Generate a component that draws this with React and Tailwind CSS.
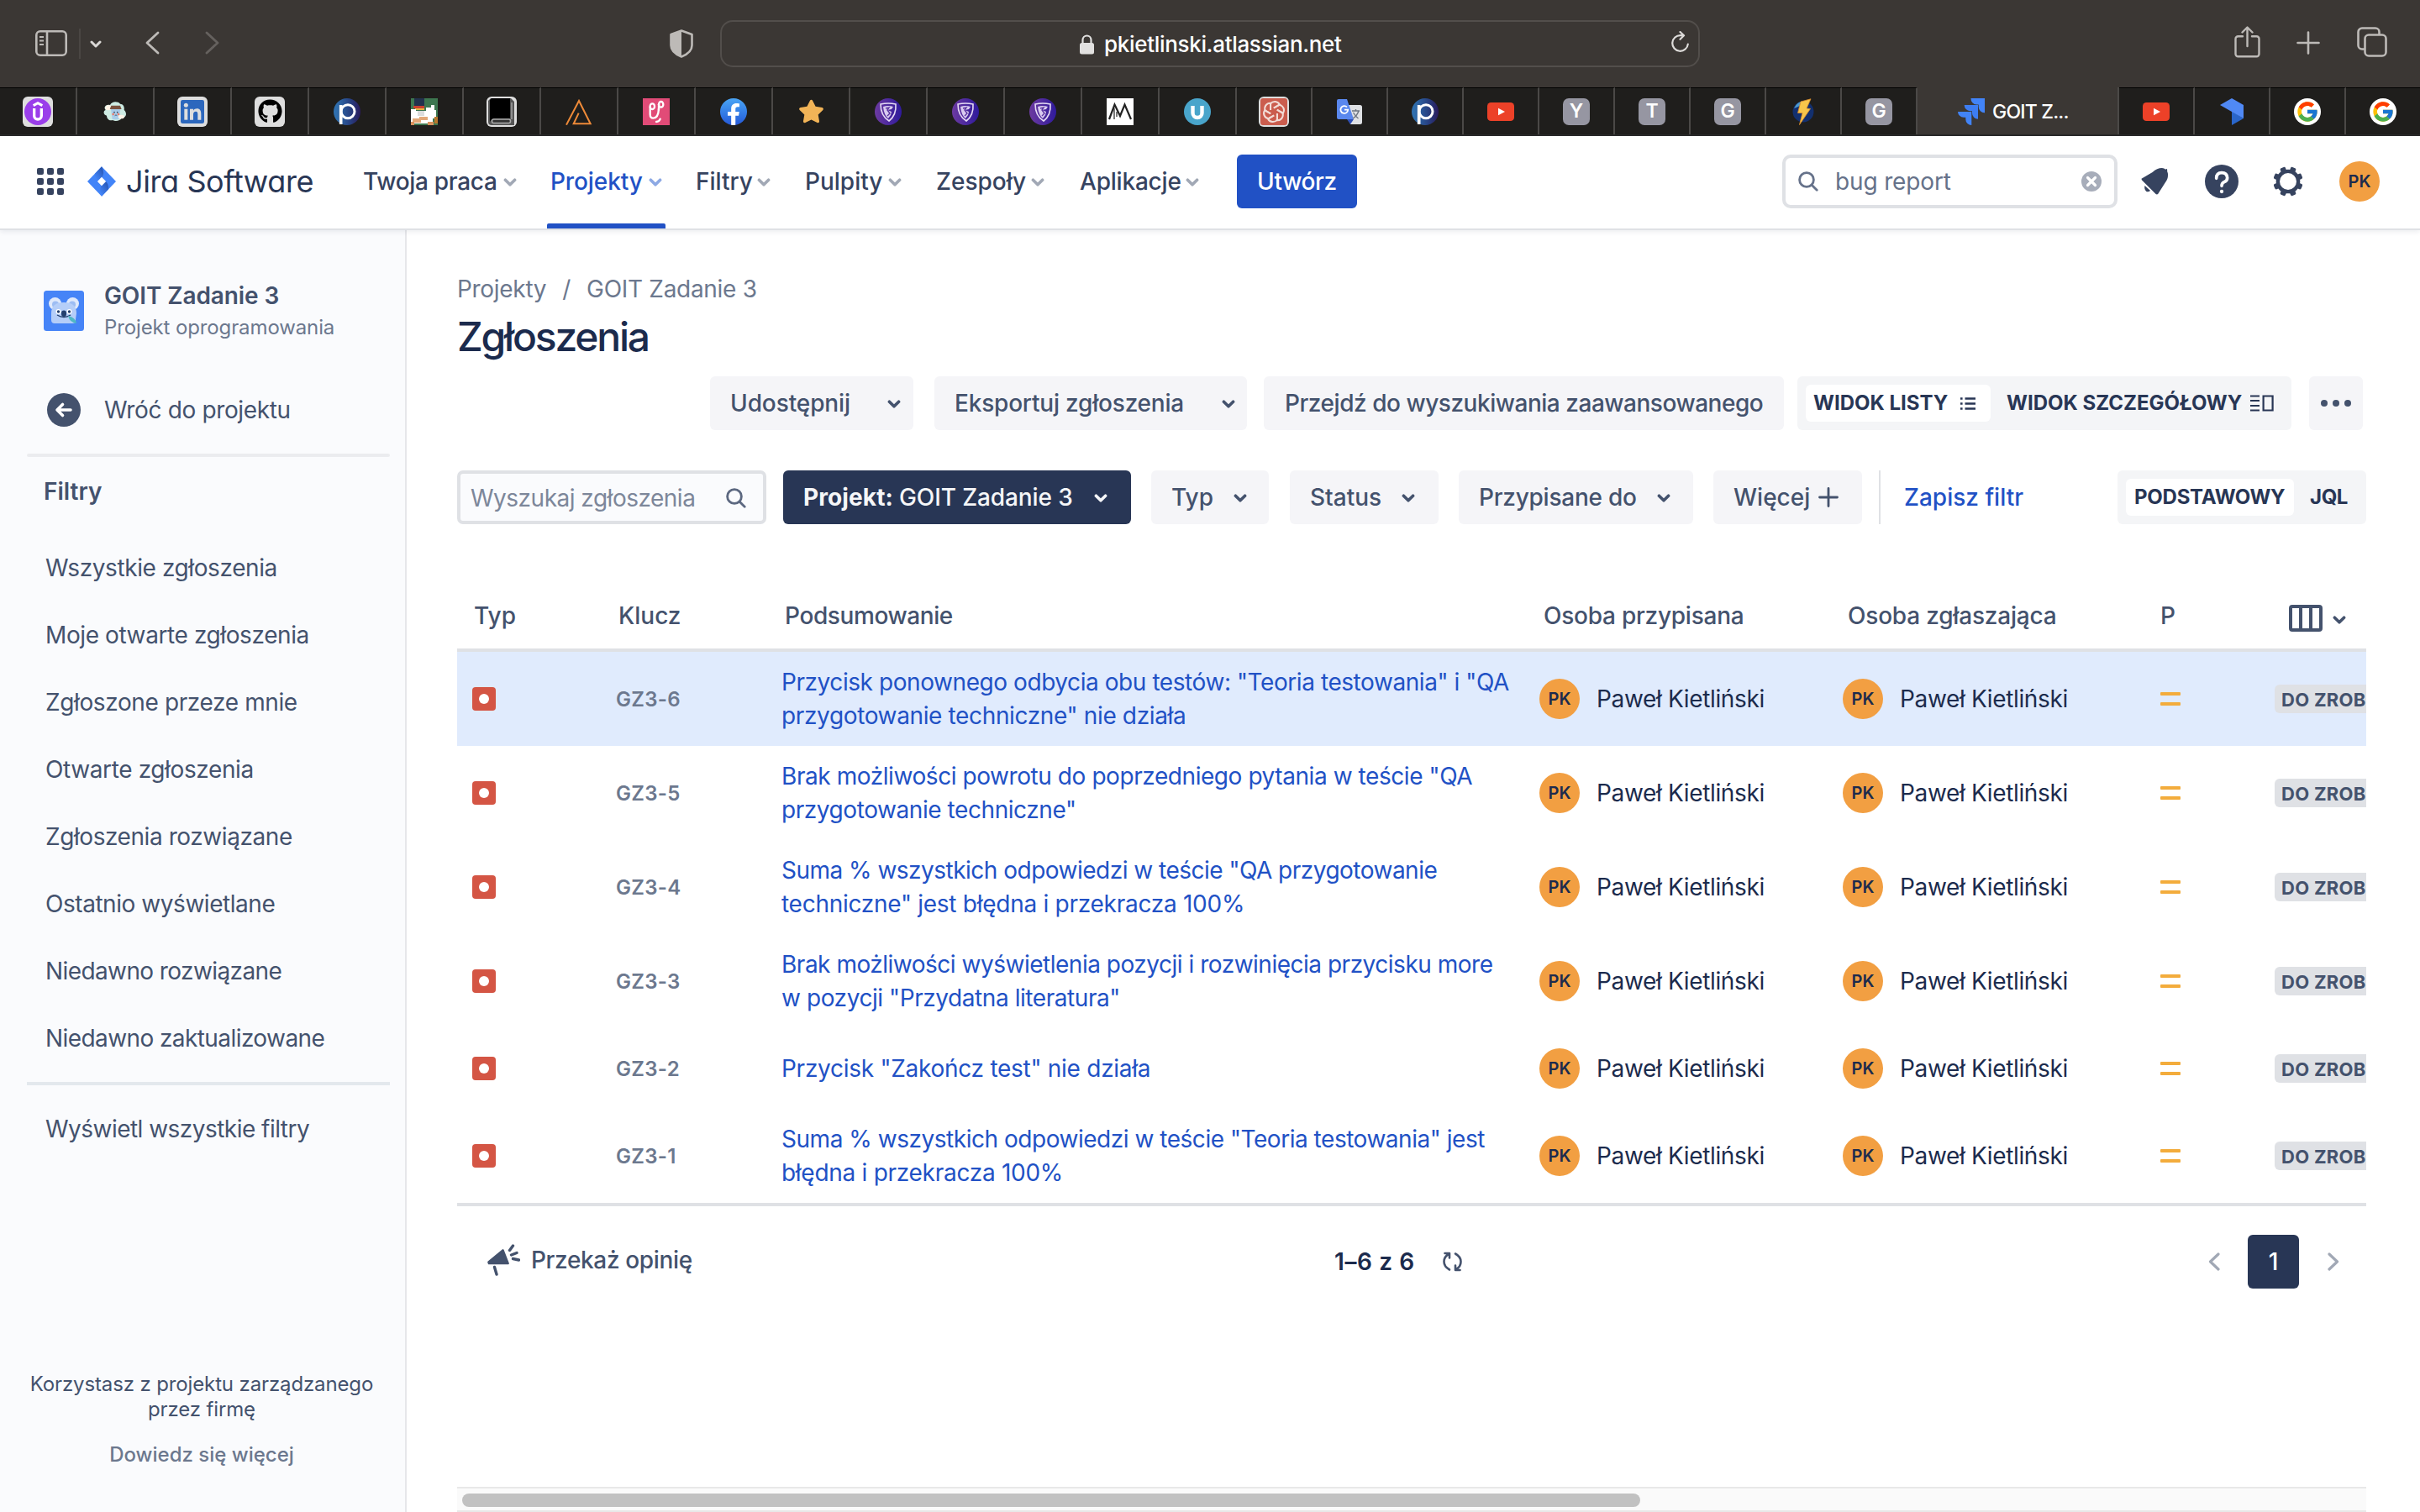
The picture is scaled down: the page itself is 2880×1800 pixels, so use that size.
import React from "react";
import { FaGithub, FaStar, FaFacebookF } from "react-icons/fa";
import { FcGoogle } from "react-icons/fc";

function Chevron({ className }) {
  return (
    <svg className={className} width="16" height="10" viewBox="0 0 16 10" fill="none" stroke="currentColor" strokeWidth="3.6" strokeLinecap="round" strokeLinejoin="round">
      <path d="M2.4 2.2 8 7.8l5.6-5.6" />
    </svg>
  );
}

function Search({ className }) {
  return (
    <svg className={className} width="24" height="24" viewBox="0 0 24 24" fill="none" stroke="currentColor" strokeWidth="2.8" strokeLinecap="round">
      <circle cx="10" cy="10" r="8.4" />
      <path d="m16.2 16.2 6 6" />
    </svg>
  );
}

/* ---------- Favicons ---------- */

function Tile({ children }) {
  return <span className="flex h-9 w-9 items-center justify-center rounded-md bg-[#dedede]">{children}</span>;
}

function Udemy() {
  return (
    <Tile>
      <svg width="32" height="32" viewBox="0 0 96 96">
        <circle cx="48" cy="48" r="48" fill="#9a3eea" />
        <path d="M32 26 48 17l16 9" fill="none" stroke="#fff" strokeWidth="9" />
        <path d="M35 36v26a13 13 0 0 0 26 0V36" fill="none" stroke="#fff" strokeWidth="10" />
      </svg>
    </Tile>
  );
}

function CoffeeCup() {
  return (
    <svg width="28" height="24" viewBox="0 0 84 72">
      <path d="M24 12C30-2 52-2 60 8c12 0 16 12 14 22 12 10 8 28-8 28-6 12-24 14-32 8C20 70 12 60 12 50-2 46 0 32 8 30-2 18 12 8 24 12z" fill="#cdebe2" />
      <ellipse cx="18" cy="22" rx="11" ry="9" fill="#fff4e6" />
      <path d="M27 26h34l-5 38H32z" fill="#a9cdea" />
      <path d="M28 14h32l5 13H23z" fill="#7a5340" />
      <circle cx="39" cy="38" r="2.500" fill="#3b4358" />
      <circle cx="50" cy="38" r="2.500" fill="#3b4358" />
      <circle cx="35" cy="45" r="4" fill="#ef7f6b" />
      <circle cx="54" cy="45" r="4" fill="#ef7f6b" />
      <path d="M41 50q4-5 8 0" stroke="#3b4358" strokeWidth="2.500" fill="none" />
      <ellipse cx="64" cy="54" rx="11" ry="7" fill="#fff4e6" />
    </svg>
  );
}

function LinkedIn() {
  return (
    <Tile>
      <svg width="28" height="28" viewBox="0 0 84 84">
        <rect width="84" height="84" rx="7" fill="#2c67bd" />
        <g fill="#dedede">
          <circle cx="19" cy="19" r="7.5" />
          <rect x="13" y="32" width="12" height="39" />
          <path d="M33 32h12v6c3-5 8-7 13-7 11 0 15 8 15 19v21H61V52c0-6-1-11-7-11s-9 4-9 10v20H33z" />
        </g>
      </svg>
    </Tile>
  );
}

function GitHub() {
  return (
    <Tile>
      <FaGithub className="h-[29px] w-[29px] text-black" />
    </Tile>
  );
}

function PIcon({ id }) {
  return (
    <svg width="32" height="32" viewBox="0 0 96 96">
      <defs>
        <linearGradient id={id}>
          <stop offset="0.1" stopColor="#2f6fae" />
          <stop offset="0.6" stopColor="#274283" />
          <stop offset="1" stopColor="#2a1a5c" />
        </linearGradient>
      </defs>
      <circle cx="48" cy="48" r="48" fill={`url(#${id})`} />
      <path d="M26 93V24" stroke="#fff" strokeWidth="11" fill="none" />
      <circle cx="51" cy="47" r="24" stroke="#fff" strokeWidth="9" fill="none" />
    </svg>
  );
}

function PixelKnight() {
  return (
    <svg width="32" height="32" viewBox="0 0 32 32" shapeRendering="crispEdges">
      <rect width="32" height="32" fill="#3d7750" />
      <path d="M4 0h12v9H4z" fill="#22324e" />
      <path d="M3 9h13v3H3z" fill="#c9402f" />
      <path d="M5 12h11v2H5z" fill="#e0b545" />
      <path d="M0 13h6v2h12v-4h6V8h4v6h2v10h-4v6H0z" fill="#fff" />
      <path d="M8 15h8v6H8z" fill="#dcdcdc" />
      <path d="M2 24h8v-2h10v4h-8v3H2z" fill="#e3a878" />
      <path d="M0 28h4v4H0zM20 28h7v4h-7z" fill="#d9925e" />
      <path d="M28 22h4v8h-4z" fill="#b7762b" />
    </svg>
  );
}

function Book() {
  return (
    <Tile>
      <svg width="32" height="32" viewBox="0 0 32 32">
        <path d="M3 0h24l4 4v28H4a4 4 0 0 1-4-4V3z" fill="#555" />
        <path d="M4 0h22v24H8c-3 0-5 2-6 4V2z" fill="#000" />
        <path d="M28 5v20" stroke="#8d8d8d" strokeWidth="2" />
        <rect x="4.500" y="25" width="22" height="4.500" rx="2" fill="#333" stroke="#aaa" strokeWidth="1.600" />
      </svg>
    </Tile>
  );
}

function OrangeTriangle() {
  return (
    <svg width="32" height="32" viewBox="0 0 96 96" fill="none" stroke="#ee8a38" strokeWidth="6">
      <path d="M3 95 48 9l41 82H29l18-38" />
    </svg>
  );
}

function PinkScript() {
  return (
    <svg width="32" height="32" viewBox="0 0 96 96">
      <rect width="96" height="96" fill="#e14b77" />
      <g fill="none" stroke="#fff" strokeWidth="7" strokeLinecap="round" strokeLinejoin="round">
        <ellipse cx="34" cy="29" rx="8" ry="10" />
        <path d="M26 31v26c0 9 4 14 11 14 14 0 19-14 20-34" />
        <ellipse cx="65" cy="22" rx="8" ry="10" />
        <path d="M57 22v20" />
        <path d="M48 84c8 0 12-4 14-10" />
      </g>
    </svg>
  );
}

function Facebook() {
  return (
    <span className="flex h-8 w-8 items-end justify-center overflow-hidden rounded-full bg-linear-to-b from-[#4ba5f5] to-[#2658d8]">
      <FaFacebookF className="h-[26px] w-[26px] text-white" />
    </span>
  );
}

function Shield({ id }) {
  return (
    <svg width="32" height="32" viewBox="0 0 32 32">
      <defs>
        <linearGradient id={id}>
          <stop offset="0" stopColor="#6c3aa0" />
          <stop offset="1" stopColor="#2f1a9c" />
        </linearGradient>
      </defs>
      <circle cx="16" cy="16" r="16" fill={`url(#${id})`} />
      <path d="M7 7q9-2 18 0 1 13-8 20Q7 21 7 7z" fill="none" stroke="#e6dcf5" strokeWidth="1.600" />
      <path d="M10 10q6-2 12 0l-2 3-5 1 5 2-1 4-3 4q-5-4-6-14z" fill="#d9cbf0" />
      <path d="M13 12l4-1-2 3 3 4-3 3" fill="none" stroke="#5a34a0" strokeWidth="1.400" />
    </svg>
  );
}

function Peaks() {
  return (
    <svg width="32" height="32" viewBox="0 0 32 32">
      <rect width="32" height="32" fill="#fff" />
      <path d="M3 25 9.500 7.500 16 21 21.500 7.500 29 25" fill="none" stroke="#222" strokeWidth="2.200" />
      <path d="M9 12v13M12 16v6" stroke="#222" strokeWidth="1.200" />
    </svg>
  );
}

function BlueU() {
  return (
    <svg width="32" height="32" viewBox="0 0 32 32">
      <circle cx="16" cy="16" r="16" fill="#49a5cb" />
      <path d="M10.500 9v8.500a5.500 5.500 0 0 0 11 0V9" fill="none" stroke="#fff" strokeWidth="4.400" />
    </svg>
  );
}

function Knot() {
  return (
    <Tile>
      <svg width="32" height="32" viewBox="-16 -16 32 32">
        <rect x="-16" y="-16" width="32" height="32" rx="3" fill="#cb5d4e" />
        <g fill="none" stroke="#f2dcd6" strokeWidth="2">
          {[0, 60, 120, 180, 240, 300].map((a) => (
            <path key={a} transform={`rotate(${a})`} d="M0-4.500 7-8.500A6.500 6.500 0 0 0-4-9.500V-2" />
          ))}
        </g>
      </svg>
    </Tile>
  );
}

function Translate() {
  return (
    <svg width="32" height="32" viewBox="0 0 32 32">
      <path d="M12 8h16.500a2.500 2.500 0 0 1 2.500 2.500v18a2.500 2.500 0 0 1-2.500 2.500H17z" fill="#dfe1e4" />
      <path d="M17 31 13 25h8z" fill="#2f4fb5" />
      <path d="M3 1h10l8 24H3a2 2 0 0 1-2-2V3a2 2 0 0 1 2-2z" fill="#5a88ee" />
      <path d="M13 10.500a4.400 4.400 0 1 0 1.200 3.200H10" fill="none" stroke="#fff" strokeWidth="1.800" />
      <path d="M19 15h9M23.500 13v2M27 15q-2 6-7 9M20.500 17q3 5 6 7" fill="none" stroke="#6d7580" strokeWidth="1.400" />
    </svg>
  );
}

function YouTube() {
  return (
    <svg width="32" height="22" viewBox="0 0 96 66">
      <rect width="96" height="66" rx="13" fill="#ec4128" />
      <path d="M39 20v26l24-13z" fill="#fff" />
    </svg>
  );
}

function Letter({ children }) {
  return <span className="flex h-8 w-8 items-center justify-center rounded-[7px] bg-[#9696a2] text-[23px] font-semibold leading-none text-white">{children}</span>;
}

function Bolt() {
  return (
    <svg width="28" height="32" viewBox="0 0 28 32">
      <circle cx="14" cy="16" r="12.500" fill="#13306f" />
      <path d="M3 12A13 13 0 0 1 16 3.200q-4 6-13 8.800z" fill="#4b9ad0" />
      <path d="M23 .800 11 4 7.500 17.500h5.500L9.500 31.500 22.500 12.500l-4.500-.5z" fill="#f8c64b" stroke="#d98a2b" strokeWidth="0.800" />
    </svg>
  );
}

function JiraTab() {
  return (
    <svg width="32" height="32" viewBox="0 0 32 32">
      <path d="M15.500 0H32v17.200a7 7 0 0 1-7.300-7V7.600h-2.300A7.200 7.200 0 0 1 15.500 0z" fill="#4284f8" />
      <path d="M7.700 8H24v16.800a7 7 0 0 1-7-7v-2.500h-2.300a7.200 7.200 0 0 1-7-7.300z" fill="#3d7df2" />
      <path d="M0 16h16.300v16a7 7 0 0 1-7-7v-2.200H7A7 7 0 0 1 0 16z" fill="#4284f8" />
    </svg>
  );
}

function Ribbon() {
  return (
    <svg width="28" height="32" viewBox="0 0 84 96">
      <path d="M42 46v50l42-24z" fill="#2a66ca" />
      <path d="M0 24 42 0l42 24v48z" fill="#5089f5" />
    </svg>
  );
}

function Google() {
  return (
    <span className="flex h-8 w-8 items-center justify-center rounded-full bg-white">
      <FcGoogle className="h-[28px] w-[28px]" />
    </span>
  );
}

const wideTabs = [
  <Udemy />, <CoffeeCup />, <LinkedIn />, <GitHub />, <PIcon id="pa" />, <PixelKnight />, <Book />, <OrangeTriangle />,
  <PinkScript />, <Facebook />, <FaStar className="h-[31px] w-[31px] text-[#f2b457]" />, <Shield id="sa" />, <Shield id="sb" />, <Shield id="sc" />, <Peaks />, <BlueU />,
];
const midTabs = [<Knot />, <Translate />, <PIcon id="pb" />, <YouTube />, <Letter>Y</Letter>, <Letter>T</Letter>, <Letter>G</Letter>, <Bolt />, <Letter>G</Letter>];
const endTabs = [<YouTube />, <Ribbon />, <Google />, <Google />];

function Tab({ width, children }) {
  return <div className={`flex shrink-0 items-center justify-center border-t border-r-2 border-t-black border-r-[#4b4947] bg-[#1f1e1c] ${width}`}>{children}</div>;
}

/* ---------- Browser chrome ---------- */

function BrowserToolbar() {
  return (
    <div className="flex h-[104px] shrink-0 items-center bg-[#3b3734] text-[#bdbab7]">
      <svg className="ml-[42px] -mt-0.5" width="38" height="31" viewBox="0 0 38 31" fill="none" stroke="currentColor" strokeWidth="2.600">
        <rect x="1.300" y="1.300" width="35.400" height="28.400" rx="4.500" />
        <path d="M14 1.500v28" />
        <path d="M5 8h5M5 12.500h5M5 17h5" strokeWidth="2" />
      </svg>
      <div className="ml-[14px] h-9 w-[2px] bg-[#4a4643]" />
      <svg className="ml-[11px]" width="14" height="9" viewBox="0 0 14 9" fill="none" stroke="#d9d7d5" strokeWidth="3" strokeLinecap="round" strokeLinejoin="round">
        <path d="m2 2 5 5 5-5" />
      </svg>
      <svg className="ml-[52px] -mt-0.5" width="17" height="28" viewBox="0 0 17 28" fill="none" stroke="currentColor" strokeWidth="2.800" strokeLinecap="round" strokeLinejoin="round">
        <path d="M15 2 2 14l13 12" />
      </svg>
      <svg className="ml-[54px] -mt-0.5 text-[#65615e]" width="17" height="28" viewBox="0 0 17 28" fill="none" stroke="currentColor" strokeWidth="2.800" strokeLinecap="round" strokeLinejoin="round">
        <path d="m2 2 13 12L2 26" />
      </svg>
      <svg className="ml-[536px]" width="28" height="34" viewBox="0 0 28 34">
        <path d="M14 1.500 26.500 6v13c0 7-5 10.500-12.500 13.500C6.500 29.500 1.500 26 1.500 19V6z" fill="none" stroke="currentColor" strokeWidth="2.600" strokeLinejoin="round" />
        <path d="M14 1.500V32.500C6.500 29.500 1.500 26 1.500 19V6z" fill="currentColor" />
      </svg>
      <div className="ml-[32px] flex h-14 w-[1166px] items-center rounded-[15px] border-2 border-[#524e4b] text-white">
        <svg className="ml-[426px] mt-px" width="17" height="24" viewBox="0 0 17 24" fill="none">
          <rect y="10" width="17" height="13.500" rx="2.500" fill="#e2e1e0" />
          <path d="M3.500 11V6.500a5 5 0 0 1 10 0V11" stroke="#e2e1e0" strokeWidth="2.200" />
        </svg>
        <span className="mt-0.5 ml-[12px] text-[26px] leading-none tracking-[-0.32px] [font-weight:450]">pkietlinski.atlassian.net</span>
        <svg className="ml-auto mr-[10px] -mt-1" width="22" height="26" viewBox="0 0 22 26" fill="none" stroke="#dddbd9" strokeWidth="2.200" strokeLinecap="round" strokeLinejoin="round">
          <path d="M19.800 15.500A9.300 9.300 0 1 1 11 5.200h3.500M10.500 1l4.500 4.300-4.500 4.500" />
        </svg>
      </div>
      <svg className="ml-[636px] -mt-1" width="31" height="38" viewBox="0 0 31 38" fill="none" stroke="currentColor" strokeWidth="2.400" strokeLinecap="round" strokeLinejoin="round">
        <path d="M10 12.200H4.500a3 3 0 0 0-3 3v18a3 3 0 0 0 3 3h22a3 3 0 0 0 3-3v-18a3 3 0 0 0-3-3H21" />
        <path d="M15.500 24V2M9.500 7.500l6-6 6 6" />
      </svg>
      <svg className="ml-[43px] -mt-0.5" width="28" height="28" viewBox="0 0 28 28" stroke="currentColor" strokeWidth="2.600" strokeLinecap="round">
        <path d="M14 1.500v25M1.500 14h25" />
      </svg>
      <svg className="ml-[44px] -mt-1" width="36" height="36" viewBox="0 0 36 36" fill="none" stroke="currentColor" strokeWidth="2.600">
        <rect x="9.500" y="9.500" width="25" height="25" rx="4.500" />
        <path d="M9.500 26.500H6A4.500 4.500 0 0 1 1.500 22V6A4.500 4.500 0 0 1 6 1.500h16A4.500 4.500 0 0 1 26.500 6v3" />
      </svg>
    </div>
  );
}

function TabStrip() {
  return (
    <div className="flex h-[58px] shrink-0 overflow-hidden border-b-2 border-b-[#2a2a2a] bg-[#3b3734]">
      {wideTabs.map((icon, i) => <Tab key={i} width="w-[92px]">{icon}</Tab>)}
      {midTabs.map((icon, i) => <Tab key={i} width="w-[90px]">{icon}</Tab>)}
      <div className="flex w-[240px] shrink-0 items-center border-r-2 border-r-[#4b4947] pt-px pl-[48px]">
        <JiraTab />
        <span className="mt-px ml-[9px] text-[23px] font-medium leading-none tracking-[-0.8px] text-white">GOIT Z...</span>
      </div>
      {endTabs.map((icon, i) => <Tab key={i} width="w-[90px]">{icon}</Tab>)}
    </div>
  );
}

/* ---------- Jira header ---------- */

const navItems = [
  { label: "Twoja praca", box: "w-[222px]", text: "w-[167px] tracking-[-0.3px]" },
  { label: "Projekty", box: "w-[172px]", text: "w-[118px] pl-px tracking-[-0.1px]", active: true },
  { label: "Filtry", box: "w-[130px]", text: "w-[75px] pl-[2px]" },
  { label: "Pulpity", box: "w-[156px]", text: "w-[101px] pl-[2px]" },
  { label: "Zespoły", box: "w-[171px]", text: "w-[115px] pl-[2px]" },
  { label: "Aplikacje", box: "w-[188px]", text: "w-[128px] pl-[2px] tracking-[-0.2px]" },
];

function Avatar({ className }) {
  return <span className={`flex h-12 w-12 shrink-0 items-center justify-center rounded-full bg-[#f29f42] text-[20px] font-semibold leading-none text-[#1c2b4d] ${className || ""}`}>PK</span>;
}

function Header() {
  return (
    <header className="relative z-10 flex h-[112px] shrink-0 items-stretch border-b-2 border-[#dfe1e5] bg-white pb-0.5 text-[28px] font-medium leading-none text-[#36435f] shadow-[0_2px_6px_rgba(9,30,66,0.08)]">
      <div className="ml-[44px] grid grid-cols-3 gap-1 self-center">
        {Array.from({ length: 9 }, (_, i) => <span key={i} className="h-2 w-2 rounded-[2px] bg-[#36435f]" />)}
      </div>
      <svg className="ml-[28px] self-center" width="34" height="36" viewBox="0 0 103 108">
        <defs>
          <linearGradient id="jl" x1="0.800" y1="0.100" x2="0.200" y2="0.900">
            <stop offset="0" stopColor="#2858b8" />
            <stop offset="1" stopColor="#4284f8" />
          </linearGradient>
        </defs>
        <path d="M51.500 0 103 54 51.500 108 0 54z" fill="#4284f8" />
        <path d="M51.500 0 28 25q-2 24 10 28l14-14q12-14-.5-39z" fill="url(#jl)" />
        <path d="M51.500 108 76 82q0-24-12-28L51.500 68q-12 18 0 40z" fill="url(#jl)" />
        <path d="M51.500 38 67 54 51.500 70 36 54z" fill="#fff" />
      </svg>
      <span className="ml-[12px] w-[282px] self-center whitespace-nowrap text-[36px] font-normal tracking-[-0.4px] text-[#283655] [font-feature-settings:'cv11']">Jira Software</span>
      <nav className="flex">
        {navItems.map((n) => (
          <div key={n.label} className={`relative flex items-center whitespace-nowrap ${n.box} ${n.active ? "text-[#2151c5]" : ""}`}>
            <span className={n.text}>{n.label}</span>
            <Chevron className={n.active ? "mt-0.5 text-[#8da9e4]" : "mt-0.5 text-[#a1a8b5]"} />
            {n.active && <span className="absolute -bottom-[2px] -left-[3px] h-[6px] w-[141px] rounded-t-[2px] bg-[#2151c5]" />}
          </div>
        ))}
      </nav>
      <button className="ml-px h-16 w-[143px] self-center rounded-[6px] bg-[#2151c5] tracking-[-0.35px] text-white">Utwórz</button>
      <div className="ml-auto flex h-16 w-[399px] items-center self-center rounded-[10px] border-4 border-[#dfe1e5] font-normal text-[#66728a]">
        <Search className="ml-[15px]" />
        <span className="ml-[20px] tracking-[-0.15px]">bug report</span>
        <svg className="ml-auto mr-[15px]" width="24" height="24" viewBox="0 0 24 24">
          <circle cx="12" cy="12" r="12" fill="#a7adba" />
          <path d="m7.500 7.500 9 9m0-9-9 9" stroke="#fff" strokeWidth="3.200" strokeLinecap="round" />
        </svg>
      </div>
      <svg className="ml-[28px] self-center" width="33" height="32" viewBox="593 300 99 97" fill="#36435f">
        <path d="M594 339 634 315Q650 300 668 300 676 300 681 305 686 301 687 306 686 312 689 318 692 338 680 352L654 393Q650 398 645 393L595 343Z" />
        <path d="M606 364 626 382Q618 388 611 384 603 376 606 364Z" />
      </svg>
      <svg className="ml-[43px] self-center" width="40" height="40" viewBox="0 0 120 120">
        <circle cx="60" cy="60" r="60" fill="#36435f" />
        <path d="M41 49q0-20 19-20t20 18q0 10-11 15-9 4-9 14" fill="none" stroke="#fff" strokeWidth="11" strokeLinecap="round" />
        <circle cx="60" cy="96" r="6.500" fill="#fff" />
      </svg>
      <svg className="ml-[41px] self-center" width="36" height="36" viewBox="-54 -54 108 108">
        <g fill="#36435f">
          <circle r="43" />
          {[22.5, 67.5, 112.5, 157.5].map((a) => <rect key={a} x="-10" y="-53" width="20" height="106" rx="5" transform={`rotate(${a})`} />)}
        </g>
        <circle r="30" fill="#fff" />
      </svg>
      <Avatar className="mr-[48px] ml-[43px] self-center" />
    </header>
  );
}

/* ---------- Sidebar ---------- */

const filters = [
  { label: "Wszystkie zgłoszenia", track: "tracking-[-0.4px]" },
  { label: "Moje otwarte zgłoszenia", track: "tracking-[-0.4px]" },
  { label: "Zgłoszone przeze mnie", track: "tracking-[-0.38px]" },
  { label: "Otwarte zgłoszenia", track: "tracking-[-0.38px]" },
  { label: "Zgłoszenia rozwiązane", track: "tracking-[-0.43px]" },
  { label: "Ostatnio wyświetlane", track: "tracking-[-0.45px]" },
  { label: "Niedawno rozwiązane", track: "tracking-[-0.6px]" },
  { label: "Niedawno zaktualizowane", track: "tracking-[-0.58px]" },
];

function Koala() {
  return (
    <svg width="48" height="48" viewBox="0 0 48 48">
      <rect width="48" height="48" rx="3.500" fill="#4684f7" />
      <g fill="#dfe9fb">
        <circle cx="13.500" cy="15.500" r="7.500" />
        <circle cx="34.500" cy="15.500" r="7.500" />
      </g>
      <g fill="#9dbdf3">
        <circle cx="14" cy="16.500" r="4" />
        <circle cx="34" cy="16.500" r="4" />
      </g>
      <path d="M9 27q0-13 15-13t15 13l-1 7v2q0 3-4 3H13q-4 0-4-4z" fill="#b5cef8" />
      <circle cx="17.500" cy="25" r="3" fill="#fff" />
      <circle cx="30.500" cy="25" r="3" fill="#fff" />
      <circle cx="17.500" cy="25" r="1.700" fill="#24406f" />
      <circle cx="30.500" cy="25" r="1.700" fill="#24406f" />
      <rect x="21" y="23.500" width="6" height="7.500" rx="3" fill="#24406f" />
      <path d="M16 29q8 5 16 0" fill="none" stroke="#24406f" strokeWidth="1.300" />
      <path d="M29 30q9 2 10 9-8-1-10-9z" fill="#4fb9c4" />
    </svg>
  );
}

function Sidebar() {
  return (
    <aside className="flex w-[484px] shrink-0 flex-col border-r-2 border-[#e6e7ea] bg-[#fafbfd] text-[28px] leading-none whitespace-nowrap text-[#44526d]">
      <div className="mt-[72px] ml-[52px] flex h-12 items-center">
        <Koala />
        <div className="mt-0.5 ml-[24px] flex flex-col gap-2">
          <span className="h-[30px] font-semibold leading-[30px] tracking-[-0.1px]">GOIT Zadanie 3</span>
          <span className="h-[30px] text-[24px] leading-[30px] tracking-[-0.12px] text-[#6c788e]">Projekt oprogramowania</span>
        </div>
      </div>
      <div className="mt-[74px] ml-[56px] flex h-10 items-center">
        <svg width="40" height="40" viewBox="0 0 40 40">
          <circle cx="20" cy="20" r="20" fill="#44526d" />
          <path d="M28 20H12.500M18.500 13.500 12 20l6.500 6.500" fill="none" stroke="#fff" strokeWidth="3.600" strokeLinecap="round" strokeLinejoin="round" />
        </svg>
        <span className="ml-[28px] tracking-[-0.35px]">Wróć do projektu</span>
      </div>
      <div className="mt-[32px] ml-[32px] h-1 w-[432px] rounded-sm bg-[#ebecef]" />
      <div className="mt-[21px] ml-[52px] h-10 leading-10 font-semibold">Filtry</div>
      <ul className="mt-[31px] ml-[54px]">
        {filters.map((f) => <li key={f.label} className={`h-20 leading-[81px] ${f.track}`}>{f.label}</li>)}
      </ul>
      <div className="mt-[12px] ml-[32px] h-1 w-[432px] bg-[#e3e8ed]" />
      <div className="mt-[32px] ml-[54px] h-10 leading-[41px] tracking-[-0.53px]">Wyświetl wszystkie filtry</div>
      <div className="mt-auto mb-[53px] w-[480px] text-center text-[24px] leading-[30px]">
        <p className="tracking-[-0.13px]">Korzystasz z projektu zarządzanego<br />przez firmę</p>
        <p className="mt-[24px] font-medium text-[#6c788e]">Dowiedz się więcej</p>
      </div>
    </aside>
  );
}

/* ---------- Issues ---------- */

const btn = "flex h-16 shrink-0 items-center rounded-[6px] bg-[#f5f5f8]";
const cols = "grid grid-cols-[189px_196px_903px_361px_378px_136px_109px] items-center";

const issues = [
  {
    key: "GZ3-6",
    selected: true,
    lines: [
      { text: 'Przycisk ponownego odbycia obu testów: "Teoria testowania" i "QA', track: "tracking-[-0.43px]" },
      { text: 'przygotowanie techniczne" nie działa', track: "tracking-[-0.36px]" },
    ],
  },
  {
    key: "GZ3-5",
    lines: [
      { text: 'Brak możliwości powrotu do poprzedniego pytania w teście "QA', track: "tracking-[-0.43px]" },
      { text: 'przygotowanie techniczne"', track: "tracking-[-0.43px]" },
    ],
  },
  {
    key: "GZ3-4",
    lines: [
      { text: 'Suma % wszystkich odpowiedzi w teście "QA przygotowanie', track: "tracking-[-0.51px]" },
      { text: 'techniczne" jest błędna i przekracza 100%', track: "tracking-[-0.27px]" },
    ],
  },
  {
    key: "GZ3-3",
    lines: [
      { text: "Brak możliwości wyświetlenia pozycji i rozwinięcia przycisku more", track: "tracking-[-0.49px]" },
      { text: 'w pozycji "Przydatna literatura"', track: "tracking-[-0.43px]" },
    ],
  },
  { key: "GZ3-2", lines: [{ text: 'Przycisk "Zakończ test" nie działa', track: "tracking-[-0.27px]" }] },
  {
    key: "GZ3-1",
    lines: [
      { text: 'Suma % wszystkich odpowiedzi w teście "Teoria testowania" jest', track: "tracking-[-0.47px]" },
      { text: "błędna i przekracza 100%", track: "tracking-[-0.28px]" },
    ],
  },
];

function Person() {
  return (
    <div className="flex items-center">
      <Avatar />
      <span className="ml-[20px] tracking-[-0.35px] text-[#1c2b4d]">Paweł Kietliński</span>
    </div>
  );
}

function IssueRow({ issue }) {
  return (
    <div className={`${cols} ${issue.lines.length > 1 ? "h-[112px]" : "h-24"} ${issue.selected ? "bg-[#e0ebfd]" : ""}`}>
      <span className="ml-[18px] flex h-7 w-7 items-center justify-center rounded-[4px] bg-[#d45544]">
        <span className="h-3 w-3 rounded-full bg-white" />
      </span>
      <span className="pt-0.5 text-[24px] font-semibold tracking-[0.3px] text-[#6c788e]">{issue.key}</span>
      <div className="pl-px leading-10 text-[#2151c5]">
        {issue.lines.map((l) => <div key={l.text} className={l.track}>{l.text}</div>)}
      </div>
      <Person />
      <Person />
      <div className="flex w-6 flex-col gap-2">
        <span className="h-1 rounded-[1px] bg-[#f3ac3c]" />
        <span className="h-1 rounded-[1px] bg-[#f3ac3c]" />
      </div>
      <span className="flex h-[34px] w-[109px] items-center rounded-l-[6px] bg-[#dfe1e5] pt-0.5 pl-[8px] text-[22px] font-bold tracking-[0.3px] text-[#44526d]">DO ZROB</span>
    </div>
  );
}

function Actions() {
  return (
    <div className="mt-[23px] ml-[301px] flex">
      <div className={`${btn} w-[242px] pr-[15px] pl-[24px] tracking-[-0.1px]`}>Udostępnij<Chevron className="mt-0.5 ml-auto" /></div>
      <div className={`${btn} ml-[25px] w-[372px] pr-[14px] pl-[24px] tracking-[-0.2px]`}>Eksportuj zgłoszenia<Chevron className="mt-0.5 ml-auto" /></div>
      <div className={`${btn} ml-[20px] w-[619px] pl-[25px] tracking-[-0.47px]`}>Przejdź do wyszukiwania zaawansowanego</div>
      <div className="ml-[16px] flex h-16 w-[588px] items-center rounded-[6px] bg-[#f4f5f7] text-[24px] font-bold text-[#283655]">
        <div className="ml-[10px] flex h-11 w-[220px] items-center rounded-[6px] bg-white pl-[9px]">
          WIDOK LISTY
          <svg className="ml-[15px]" width="18" height="15" viewBox="0 0 18 15" stroke="currentColor" strokeWidth="2.400">
            <path d="M5.500 1.500H18M5.500 7.500H18M5.500 13.500H18M0 1.500h2.600M0 7.500h2.600M0 13.500h2.600" />
          </svg>
        </div>
        <span className="ml-[19px]">WIDOK SZCZEGÓŁOWY</span>
        <svg className="ml-[10px]" width="28" height="20" viewBox="0 0 28 20" fill="none" stroke="currentColor" strokeWidth="2.200">
          <path d="M0 1.500h11M0 7h11M0 13h11M0 18.500h11" />
          <path d="M15.600 1.500h11v17h-11z" />
        </svg>
      </div>
      <div className={`${btn} ml-[21px] w-16 justify-center gap-[6px]`}>
        {[0, 1, 2].map((i) => <span key={i} className="h-2 w-2 rounded-full bg-[#44526d]" />)}
      </div>
    </div>
  );
}

function FilterBar() {
  return (
    <div className="mt-[48px] flex h-16">
      <div className="flex h-16 w-[368px] items-center rounded-[7px] border-4 border-[#dfe1e5] bg-[#fafbfd] pl-[12px] pt-px font-normal tracking-[-0.5px] text-[#7d879a]">
        Wyszukaj zgłoszenia
        <Search className="mr-[20px] ml-auto text-[#5c6880]" />
      </div>
      <div className="ml-[20px] flex h-16 w-[414px] items-center rounded-[6px] bg-[#283655] pr-[28px] pl-[24px] text-[#f5f6f8]">
        <b className="font-bold tracking-[0.1px]">Projekt:</b>
        <span className="ml-[7px] tracking-[-0.1px]">GOIT Zadanie 3</span>
        <Chevron className="mt-0.5 ml-auto" />
      </div>
      <div className={`${btn} ml-[24px] w-[140px] pr-[26px] pl-[24px]`}>Typ<Chevron className="mt-0.5 ml-auto" /></div>
      <div className={`${btn} ml-[25px] w-[177px] pr-[28px] pl-[24px]`}>Status<Chevron className="mt-0.5 ml-auto" /></div>
      <div className={`${btn} ml-[24px] w-[279px] pr-[27px] pl-[24px] tracking-[-0.25px]`}>Przypisane do<Chevron className="mt-0.5 ml-auto" /></div>
      <div className={`${btn} ml-[24px] w-[177px] pr-[28px] pl-[24px]`}>
        Więcej
        <svg className="ml-auto" width="24" height="24" viewBox="0 0 24 24" stroke="currentColor" strokeWidth="2.800" strokeLinecap="round">
          <path d="M12 1.500v21M1.500 12h21" />
        </svg>
      </div>
      <div className="ml-[20px] w-[2px] bg-[#dfe1e5]" />
      <span className="ml-[28px] self-center text-[#2151c5]">Zapisz filtr</span>
      <div className="ml-auto flex h-16 w-[296px] items-center rounded-[6px] bg-[#f4f5f7] text-[24px] font-bold text-[#283655]">
        <div className="ml-[10px] flex h-11 w-[200px] items-center rounded-[6px] bg-white pl-[10px] tracking-[-0.25px]">PODSTAWOWY</div>
        <span className="ml-[19px] tracking-[-0.4px]">JQL</span>
      </div>
    </div>
  );
}

function IssueTable() {
  return (
    <div className="mt-[68px] border-b-4 border-[#dfe1e5]">
      <div className={`${cols} h-[84px] border-b-4 border-[#dfe1e5] pt-0.5 text-[#44526d]`}>
        <span className="pl-[20px]">Typ</span>
        <span className="pl-[3px]">Klucz</span>
        <span className="pl-[5px] tracking-[-0.4px]">Podsumowanie</span>
        <span className="pl-[5px] tracking-[-0.25px]">Osoba przypisana</span>
        <span className="pl-[6px] tracking-[-0.2px]">Osoba zgłaszająca</span>
        <span>P</span>
        <div className="mt-1.5 flex items-center pl-[17px]">
          <svg width="40" height="32" viewBox="0 0 40 32" fill="none" stroke="currentColor" strokeWidth="4">
            <rect x="2" y="2" width="36" height="28" rx="2" />
            <path d="M14 2v28M26 2v28" />
          </svg>
          <Chevron className="ml-[12px] mt-1" />
        </div>
      </div>
      <div className="font-normal">
        {issues.map((i) => <IssueRow key={i.key} issue={i} />)}
      </div>
    </div>
  );
}

function Footer() {
  return (
    <div className="mt-[34px] flex h-16 items-center">
      <svg className="ml-[36px] -mt-1" width="39" height="38" viewBox="0 0 39 38" fill="none" stroke="#44526d" strokeLinecap="round" strokeLinejoin="round">
        <path d="M1.500 21.500 18.500 7.500 24.500 23H2z" fill="#44526d" strokeWidth="2.600" />
        <path d="M8.500 27.500 11 36" strokeWidth="3.400" />
        <path d="m26.500 7.500 4-5.500M28.500 13l6.500-2.500M30.500 17.500l7 1.500" strokeWidth="3.400" />
      </svg>
      <span className="-mt-1 ml-[13px] w-[956px] tracking-[-0.35px]">Przekaż opinię</span>
      <span className="w-[129px] font-semibold tracking-[0.6px] text-[#1c2b4d]">1–6 z 6</span>
      <svg width="23" height="24" viewBox="0 0 23 24" fill="none" stroke="#44526d" strokeWidth="2.600" strokeLinecap="round" strokeLinejoin="round">
        <path d="M8 21.500C3.500 19 1.500 16 1.500 12c0-4 2-7 5.500-9M2.500 2H8v5.500" />
        <path d="M15 2.500c4.500 2.500 6.500 5.500 6.500 9.500 0 4-2 7-5.500 9M20.500 22H15v-5.500" />
      </svg>
      <svg className="ml-auto" width="14" height="22" viewBox="0 0 14 22" fill="none" stroke="#a1a8b5" strokeWidth="3.200" strokeLinecap="round" strokeLinejoin="round">
        <path d="M12 2 2.500 11l9.500 9" />
      </svg>
      <span className="ml-[33px] flex h-16 w-[61px] items-center justify-center rounded-[6px] bg-[#283655] text-white">1</span>
      <svg className="mr-[32px] ml-[34px]" width="14" height="22" viewBox="0 0 14 22" fill="none" stroke="#a1a8b5" strokeWidth="3.200" strokeLinecap="round" strokeLinejoin="round">
        <path d="m2 2 9.500 9L2 20" />
      </svg>
    </div>
  );
}

export default function App() {
  return (
    <div className="flex h-[1800px] w-[2880px] flex-col overflow-hidden bg-white font-[Inter,'Liberation_Sans',sans-serif]">
      <BrowserToolbar />
      <TabStrip />
      <Header />
      <div className="flex min-h-0 flex-1">
        <Sidebar />
        <main className="flex w-[2332px] flex-col pl-[60px] text-[28px] font-medium leading-none whitespace-nowrap text-[#44526d]">
          <div className="mt-[50px] flex h-10 items-center font-normal tracking-[-0.3px] text-[#6c788e]">
            <span>Projekty</span>
            <span className="ml-[19px]">/</span>
            <span className="ml-[19px]">GOIT Zadanie 3</span>
          </div>
          <h1 className="mt-[13px] h-12 text-[48px] leading-[48px] font-medium tracking-[-2.200px] text-[#1c2b4d]">Zgłoszenia</h1>
          <Actions />
          <FilterBar />
          <IssueTable />
          <Footer />
          <div className="mt-auto flex h-[30px] items-center border-y-2 border-[#e8e8e8] bg-[#fafafa] pl-[6px]">
            <div className="mt-0.5 h-4 w-[1402px] rounded-full bg-[#c1c1c1]" />
          </div>
        </main>
      </div>
    </div>
  );
}
